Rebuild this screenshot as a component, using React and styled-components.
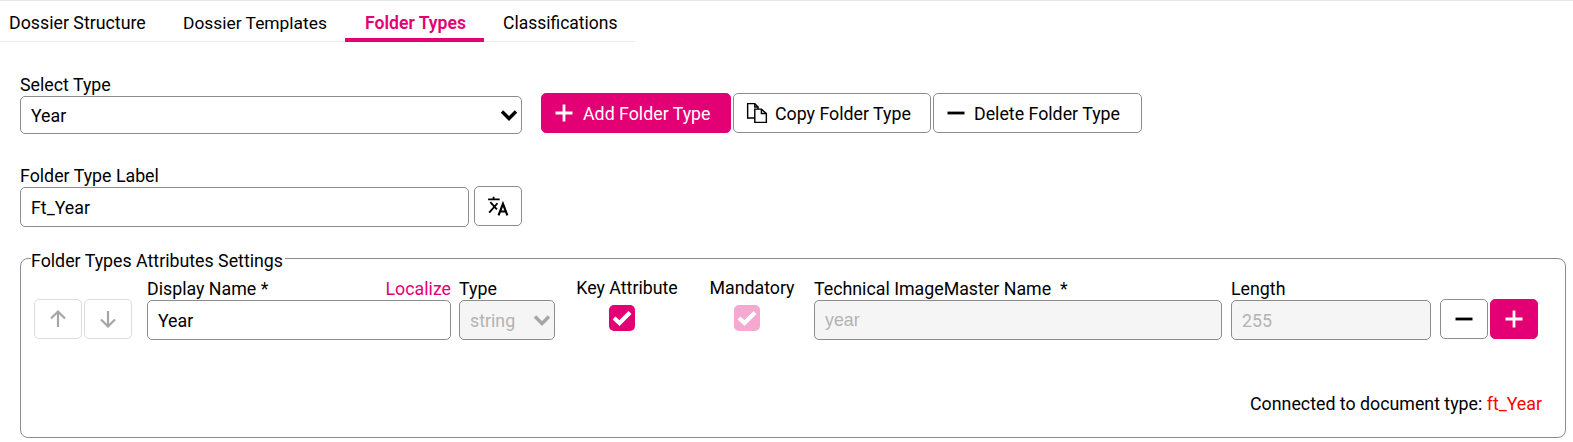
import React from "react";
import styled, { createGlobalStyle } from "styled-components";

const PINK = "#e20074";
const BORDER = "#8c8c8c";

const Global = createGlobalStyle`
  html, body { margin: 0; padding: 0; background: #fff; }
  body { font-family: Roboto, "Liberation Sans", sans-serif; font-size: 17.8px; color: #000; }
  * { box-sizing: border-box; }
`;

const Page = styled.div`
  width: 1573px;
  height: 442px;
  overflow: hidden;
  border-top: 1px solid #e6e6e6;
`;

const TabBar = styled.nav`
  display: flex;
  width: 635px;
  height: 41px;
  border-bottom: 1px solid #ececec;
`;

const Tab = styled.div`
  width: ${p => p.$w}px;
  height: 41px;
  flex: none;
  display: flex;
  align-items: center;
  padding: 6px 0 0 ${p => p.$pl}px;
  white-space: nowrap;
  font-size: ${p => p.$fs || 17.8}px;
  font-weight: ${p => (p.$active ? 600 : 400)};
  color: ${p => (p.$active ? PINK : "#000")};
  border-bottom: 4px solid ${p => (p.$active ? PINK : "transparent")};
`;

const Content = styled.main`
  padding: 32px 7px 0 20px;
`;

const TypeRow = styled.section`
  display: flex;
  align-items: flex-end;
  gap: 19px;
  height: 60px;
`;

const Field = styled.div`
  display: flex;
  flex-direction: column;
  flex: none;
  width: ${p => p.$w}px;
  margin-left: ${p => p.$ml || 0}px;
`;

const Label = styled.label`
  line-height: 22px;
  height: 22px;
  white-space: nowrap;
`;

const chevron = c =>
  `url("data:image/svg+xml,%3Csvg xmlns='http://www.w3.org/2000/svg' viewBox='0 0 18 12'%3E%3Cpath d='M2 2.5l7 7 7-7' fill='none' stroke='${c}' stroke-width='3.4'/%3E%3C/svg%3E")`;

const Select = styled.select`
  appearance: none;
  width: 100%;
  height: ${p => p.$h || 38}px;
  padding: 0 10px;
  font: inherit;
  color: ${p => (p.disabled ? "#b3b3b3" : "#000")};
  background: ${p => (p.disabled ? "#f5f5f5" : "#fff")} ${p => chevron(p.disabled ? "%23a6a6a6" : "%23000")} no-repeat right 3px center / 18px 12px;
  border: 1px solid ${BORDER};
  border-radius: 5px;
  opacity: 1;
`;

const Input = styled.input`
  display: block;
  width: 100%;
  height: 40px;
  padding: 0 10px;
  font: inherit;
  font-family: ${p => (p.$arial ? '"Liberation Sans", sans-serif' : "inherit")};
  color: #000;
  background: #fff;
  border: 1px solid ${BORDER};
  border-radius: 5px;
  &:disabled {
    background: #f5f5f5;
    color: #b3b3b3;
    -webkit-text-fill-color: #b3b3b3;
    opacity: 1;
  }
`;

const Button = styled.button`
  display: flex;
  align-items: center;
  justify-content: ${p => (p.$center ? "center" : "flex-start")};
  gap: ${p => p.$gap || 8}px;
  flex: none;
  width: ${p => p.$w}px;
  height: 40px;
  padding: ${p => (p.$center ? "0" : "0 12px")};
  font: inherit;
  white-space: nowrap;
  border-radius: 5px;
  color: ${p => (p.$primary ? "#fff" : "#000")};
  background: ${p => (p.$primary ? PINK : "#fff")};
  border: 1px solid ${p => (p.$primary ? PINK : p.$faint ? "#dcdcdc" : BORDER)};
`;

const ButtonGroup = styled.div`
  display: flex;
  gap: 2px;
  margin-bottom: 1px;
`;

const LabelRow = styled.section`
  display: flex;
  align-items: flex-end;
  gap: 5px;
  margin-top: 31px;
`;

const RaisedSlot = styled.div`
  margin-bottom: 1px;
`;

const Fieldset = styled.fieldset`
  position: relative;
  margin: 21px 0 0;
  padding: 0 13px;
  height: 190px;
  width: 1546px;
  border: 1px solid ${BORDER};
  border-radius: 8px;
`;

const Legend = styled.legend`
  margin-left: -3px;
  padding: 6px 2px 0 0;
  line-height: 14px;
`;

const AttrRow = styled.div`
  display: flex;
  align-items: flex-end;
  margin-top: 9px;
`;

const Movers = styled.div`
  display: flex;
  flex: none;
  gap: 2px;
  margin: 0 ${p => p.$mr || 0}px 1px ${p => p.$ml || 0}px;
`;

const LabelLine = styled.div`
  display: flex;
  justify-content: space-between;
  height: 22px;
  line-height: 22px;
  white-space: nowrap;
`;

const Localize = styled.span`
  color: ${PINK};
`;

const CheckCol = styled.div`
  display: flex;
  flex-direction: column;
  align-items: center;
  flex: none;
  width: ${p => p.$w}px;
  margin-right: ${p => p.$mr || 0}px;
  height: 63px;
`;

const Check = styled.span`
  width: 26px;
  height: 26px;
  margin: 6px 10px 0 0;
  display: flex;
  align-items: center;
  justify-content: center;
  border-radius: 5px;
  background: ${p => (p.$disabled ? "#f5a8d0" : PINK)};
`;

const Status = styled.p`
  margin: 0;
  position: absolute;
  right: 23px;
  bottom: 22px;
  line-height: 22px;
`;

const Red = styled.span`
  color: #ff0000;
`;

const Plus = ({ c = "#fff", s = 20 }) => (
  <svg width={s} height={s} viewBox="0 0 20 20"><path d="M10 1.5v17M1.5 10h17" stroke={c} strokeWidth="2.8" fill="none" /></svg>
);
const Minus = ({ s = 20 }) => (
  <svg width={s} height={s} viewBox="0 0 20 20"><path d="M1.5 10h17" stroke="#000" strokeWidth="2.8" fill="none" /></svg>
);
const CopyIcon = () => (
  <svg width="22" height="22" viewBox="0 0 20 20" fill="none" stroke="#000" strokeWidth="1.3">
    <path d="M1.500 1.500h6.500l3 3v10h-9.500z" fill="#fff" />
    <path d="M8 6.500h6l4.500 4v8H8z" fill="#fff" />
    <path d="M14 6.500v4h4.500M8 1.500v3h3" />
  </svg>
);
const TranslateIcon = () => (
  <svg width="22" height="22" viewBox="0 0 20 20" fill="none" stroke="#000" strokeWidth="1.7">
    <path d="M1 4h10.500M6 1.500V4M2 16l7.500-8.500M3 6.500L9 13" />
    <path d="M10.500 18.500L14.500 8l4 10.500M12 15h5" strokeWidth="2" />
  </svg>
);
const ArrowUp = () => (
  <svg width="20" height="20" viewBox="0 0 20 20" fill="none" stroke="#a6a6a6" strokeWidth="2.2">
    <path d="M10 18V3M3 9.500L10 2.500l7 7" />
  </svg>
);
const ArrowDown = () => (
  <svg width="20" height="20" viewBox="0 0 20 20" fill="none" stroke="#a6a6a6" strokeWidth="2.2">
    <path d="M10 2v15M3 10.500l7 7 7-7" />
  </svg>
);
const Tick = () => (
  <svg width="20" height="16" viewBox="0 0 20 16" fill="none" stroke="#fff" strokeWidth="4.200"><path d="M2 8l5.500 5L18 2.500" /></svg>
);

export default function App() {
  return (
    <Page>
      <Global />
      <TabBar>
        <Tab $w={155} $pl={9}>Dossier Structure</Tab>
        <Tab $w={190} $pl={28} $fs={17.4}>Dossier Templates</Tab>
        <Tab $w={139} $pl={20} $fs={17.6} $active>Folder Types</Tab>
        <Tab $w={151} $pl={19} $fs={17.5}>Classifications</Tab>
      </TabBar>
      <Content>
        <TypeRow>
          <Field $w={502}>
            <Label>Select Type</Label>
            <Select defaultValue="Year"><option>Year</option></Select>
          </Field>
          <ButtonGroup>
            <Button $w={190} $primary $gap={9}><Plus />Add Folder Type</Button>
            <Button $w={198} $gap={7}><CopyIcon />Copy Folder Type</Button>
            <Button $w={209} $gap={8}><Minus />Delete Folder Type</Button>
          </ButtonGroup>
        </TypeRow>
        <LabelRow>
          <Field $w={449}>
            <Label>Folder Type Label</Label>
            <Input defaultValue="Ft_Year" />
          </Field>
          <RaisedSlot>
            <Button $w={48} $center><TranslateIcon /></Button>
          </RaisedSlot>
        </LabelRow>
        <Fieldset>
          <Legend>Folder Types Attributes Settings</Legend>
          <AttrRow>
            <Movers $mr={15}>
              <Button $w={48} $center $faint><ArrowUp /></Button>
              <Button $w={48} $center $faint><ArrowDown /></Button>
            </Movers>
            <Field $w={304}>
              <LabelLine><span>Display Name *</span><Localize>Localize</Localize></LabelLine>
              <Input defaultValue="Year" />
            </Field>
            <Field $w={96} $ml={8}>
              <Label>Type</Label>
              <Select disabled $h={40} defaultValue="string"><option>string</option></Select>
            </Field>
            <CheckCol $w={144}>
              <Label>Key Attribute</Label>
              <Check><Tick /></Check>
            </CheckCol>
            <CheckCol $w={106} $mr={9}>
              <Label>Mandatory</Label>
              <Check $disabled><Tick /></Check>
            </CheckCol>
            <Field $w={408}>
              <Label>Technical ImageMaster Name&nbsp; *</Label>
              <Input $arial disabled value="year" readOnly />
            </Field>
            <Field $w={200} $ml={9}>
              <Label>Length</Label>
              <Input disabled value="255" readOnly />
            </Field>
            <Movers $ml={9}>
              <Button $w={48} $center><Minus /></Button>
              <Button $w={48} $center $primary><Plus /></Button>
            </Movers>
          </AttrRow>
          <Status>Connected to document type: <Red>ft_Year</Red></Status>
        </Fieldset>
      </Content>
    </Page>
  );
}
